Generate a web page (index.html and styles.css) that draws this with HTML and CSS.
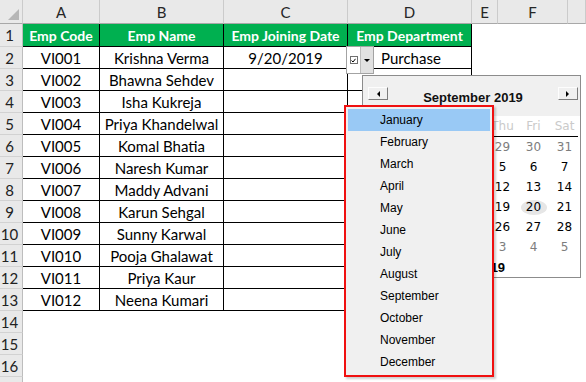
FILE: index.html
```html
<!DOCTYPE html>
<html lang="en">
<head>
    <meta charset="UTF-8">
    <title>Emp Joining Date - Date Picker</title>
    <link rel="stylesheet" href="styles.css">
</head>
<body>
<div class="sheet">
    <!-- column letters -->
    <div class="row colhead">
        <div class="corner"><span class="tri"></span></div>
        <div>A</div><div>B</div><div>C</div><div>D</div><div>E</div><div>F</div><div></div>
    </div>

    <div class="row head">
        <div class="num">1</div>
        <div class="cell th">Emp Code</div>
        <div class="cell th">Emp Name</div>
        <div class="cell th">Emp Joining Date</div>
        <div class="cell th">Emp Department</div>
    </div>
    <div class="row">
        <div class="num">2</div>
        <div class="cell">VI001</div><div class="cell">Krishna Verma</div><div class="cell">9/20/2019</div><div class="cell dept">Purchase</div>
    </div>
    <div class="row">
        <div class="num">3</div>
        <div class="cell">VI002</div><div class="cell">Bhawna Sehdev</div><div class="cell"></div><div class="cell"></div>
    </div>
    <div class="row">
        <div class="num">4</div>
        <div class="cell">VI003</div><div class="cell">Isha Kukreja</div><div class="cell"></div><div class="cell"></div>
    </div>
    <div class="row">
        <div class="num">5</div>
        <div class="cell">VI004</div><div class="cell">Priya Khandelwal</div><div class="cell"></div><div class="cell"></div>
    </div>
    <div class="row">
        <div class="num">6</div>
        <div class="cell">VI005</div><div class="cell">Komal Bhatia</div><div class="cell"></div><div class="cell"></div>
    </div>
    <div class="row">
        <div class="num">7</div>
        <div class="cell">VI006</div><div class="cell">Naresh Kumar</div><div class="cell"></div><div class="cell"></div>
    </div>
    <div class="row">
        <div class="num">8</div>
        <div class="cell">VI007</div><div class="cell">Maddy Advani</div><div class="cell"></div><div class="cell"></div>
    </div>
    <div class="row">
        <div class="num">9</div>
        <div class="cell">VI008</div><div class="cell">Karun Sehgal</div><div class="cell"></div><div class="cell"></div>
    </div>
    <div class="row">
        <div class="num">10</div>
        <div class="cell">VI009</div><div class="cell">Sunny Karwal</div><div class="cell"></div><div class="cell"></div>
    </div>
    <div class="row">
        <div class="num">11</div>
        <div class="cell">VI010</div><div class="cell">Pooja Ghalawat</div><div class="cell"></div><div class="cell"></div>
    </div>
    <div class="row">
        <div class="num">12</div>
        <div class="cell">VI011</div><div class="cell">Priya Kaur</div><div class="cell"></div><div class="cell"></div>
    </div>
    <div class="row">
        <div class="num">13</div>
        <div class="cell">VI012</div><div class="cell">Neena Kumari</div><div class="cell"></div><div class="cell"></div>
    </div>
    <div class="row"><div class="num">14</div></div>
    <div class="row"><div class="num">15</div></div>
    <div class="row"><div class="num">16</div></div>
    <div class="row"><div class="num">17</div></div>

    <!-- in-cell date picker control -->
    <div class="ctl">
        <div class="ctl-box">
            <span class="chk">
                <svg width="5" height="5" viewBox="0 0 5 5"><polyline points="0.5,2.5 2,4 4.5,0.8" fill="none" stroke="#000" stroke-width="1"/></svg>
            </span>
        </div>
        <div class="ctl-btn"></div>
    </div>

    <!-- calendar popup -->
    <div class="cal">
        <div class="cal-head">
            <span class="arrow prev"></span>
            <span class="cal-title">September 2019</span>
            <span class="arrow next"></span>
        </div>
        <div class="dow">
            <span>Sun</span><span>Mon</span><span>Tue</span><span>Wed</span><span>Thu</span><span>Fri</span><span>Sat</span>
        </div>
        <div class="rule"></div>
        <div class="days">
            <span class="out">25</span><span class="out">26</span><span class="out">27</span><span class="out">28</span><span class="out">29</span><span class="out">30</span><span class="out">31</span>
            <span>1</span><span>2</span><span>3</span><span>4</span><span>5</span><span>6</span><span>7</span>
            <span>8</span><span>9</span><span>10</span><span>11</span><span>12</span><span>13</span><span>14</span>
            <span>15</span><span>16</span><span>17</span><span>18</span><span>19</span><span><b class="today">20</b></span><span>21</span>
            <span>22</span><span>23</span><span>24</span><span>25</span><span>26</span><span>27</span><span>28</span>
            <span>29</span><span>30</span><span class="out">1</span><span class="out">2</span><span class="out">3</span><span class="out">4</span><span class="out">5</span>
        </div>
        <div class="cal-foot">Today: 9/20/2019</div>
    </div>

    <!-- month list -->
    <div class="months">
        <div class="sel">January</div>
        <div>February</div>
        <div>March</div>
        <div>April</div>
        <div>May</div>
        <div>June</div>
        <div>July</div>
        <div>August</div>
        <div>September</div>
        <div>October</div>
        <div>November</div>
        <div>December</div>
    </div>
</div>
</body>
</html>
```

FILE: styles.css
```css
body {
    margin: 0;
    background: #fff;
    overflow: hidden;
    font-family: Lato, 'Liberation Sans', sans-serif;
    color: #000;
}
.sheet {
    position: relative;
    width: 586px;
    height: 382px;
    overflow: hidden;
}
.row {
    display: grid;
    grid-template-columns: 23px 77px 124px 124px 124px 26px 70px 1fr;
    height: 22px;
}
.row > div {
    box-sizing: border-box;
    display: flex;
    align-items: center;
    justify-content: center;
    font-size: 15px;
    white-space: nowrap;
}
.colhead {
    height: 24px;
}
.colhead > div {
    background: #e9e9e9;
    border-right: 1px solid #cbcbcb;
    border-bottom: 1px solid #a8a8a8;
    color: #262626;
}
.corner {
    justify-content: flex-end !important;
    align-items: flex-end !important;
    padding: 0 3px 3px 0;
}
.tri {
    width: 0;
    height: 0;
    border-left: 11px solid transparent;
    border-bottom: 11px solid #b6b6b6;
}
.head {
    height: 23px;
}
.num {
    background: #e9e9e9;
    border-right: 1px solid #bdbdbd;
    border-bottom: 1px solid #d2d2d2;
    color: #222;
    padding-right: 3px;
}
.cell {
    border-right: 1px solid #000;
    border-bottom: 1px solid #000;
}
.th {
    background: #00b050;
    color: #fff;
    font-weight: bold;
    font-size: 14px !important;
}
.dept {
    justify-content: flex-start !important;
    padding-left: 33px;
}

/* date picker control in D2 */
.ctl {
    position: absolute;
    left: 346px;
    top: 46px;
    width: 28px;
    height: 28px;
    box-sizing: border-box;
    border: 1px solid #a3a3a3;
    background: #fff;
    display: flex;
}
.ctl-box {
    flex: 1;
    display: flex;
    align-items: center;
    justify-content: center;
}
.chk {
    width: 8px;
    height: 8px;
    box-sizing: border-box;
    border: 1px solid #707070;
    display: flex;
    align-items: center;
    justify-content: center;
    background: #fff;
}
.chk svg {
    display: block;
}
.ctl-btn {
    width: 12px;
    background: #e1e1e1;
    border-left: 1px solid #bcbcbc;
    display: flex;
    align-items: center;
    justify-content: center;
}
.ctl-btn::after {
    content: "";
    border-left: 3px solid transparent;
    border-right: 3px solid transparent;
    border-top: 3px solid #000;
}

/* calendar */
.cal {
    position: absolute;
    left: 362px;
    top: 75px;
    width: 219px;
    height: 203px;
    box-sizing: border-box;
    border: 1px solid #8c8c8c;
    background: #fff;
    font-family: 'DejaVu Sans', sans-serif;
}
.cal-head {
    height: 40px;
    box-sizing: border-box;
    background: #f0f0f0;
    display: flex;
    justify-content: space-between;
    align-items: flex-start;
    padding: 11px 2px 0 5px;
}
.arrow {
    width: 20px;
    height: 13px;
    box-sizing: border-box;
    border: 1px solid;
    border-color: #fdfdfd #7c7c7c #7c7c7c #fdfdfd;
    background: #f0f0f0;
    display: flex;
    align-items: center;
    justify-content: center;
}
.arrow.prev::after {
    content: "";
    border-top: 3px solid transparent;
    border-bottom: 3px solid transparent;
    border-right: 3px solid #000;
}
.arrow.next::after {
    content: "";
    border-top: 3px solid transparent;
    border-bottom: 3px solid transparent;
    border-left: 3px solid #000;
}
.cal-title {
    font-family: 'Liberation Sans', sans-serif;
    font-weight: bold;
    font-size: 13px;
    line-height: 13px;
    margin-top: 4px;
    color: #111;
}
.dow, .days {
    display: grid;
    grid-template-columns: repeat(7, 31px);
    grid-auto-rows: 20px;
    font-size: 12px;
    align-items: center;
    justify-items: center;
}
.dow {
    color: #cacaca;
}
.rule {
    height: 1px;
    background: #000;
    margin: 0 2px 0 7px;
}
.days span {
    display: flex;
    align-items: center;
    justify-content: center;
}
.days .out {
    color: #7d7d7d;
}
.today {
    font-weight: normal;
    width: 26px;
    height: 15px;
    border-radius: 50%;
    background: #e6e6e6;
    display: flex;
    align-items: center;
    justify-content: center;
}
.cal-foot {
    height: 20px;
    display: flex;
    align-items: center;
    padding-left: 39px;
    font-family: 'Liberation Sans', sans-serif;
    font-weight: bold;
    font-size: 13px;
}

/* month list */
.months {
    position: absolute;
    left: 344px;
    top: 105px;
    width: 150px;
    box-sizing: border-box;
    border: 2px solid #f01010;
    padding: 2px;
    background: #f0f0f0;
    box-shadow: 2px 2px 2px rgba(0, 0, 0, 0.2);
    font-family: 'Liberation Sans', sans-serif;
    font-size: 12px;
    color: #000;
}
.months div {
    height: 22px;
    line-height: 22px;
    padding-left: 32px;
}
.months .sel {
    background: #99c9f5;
}
```
